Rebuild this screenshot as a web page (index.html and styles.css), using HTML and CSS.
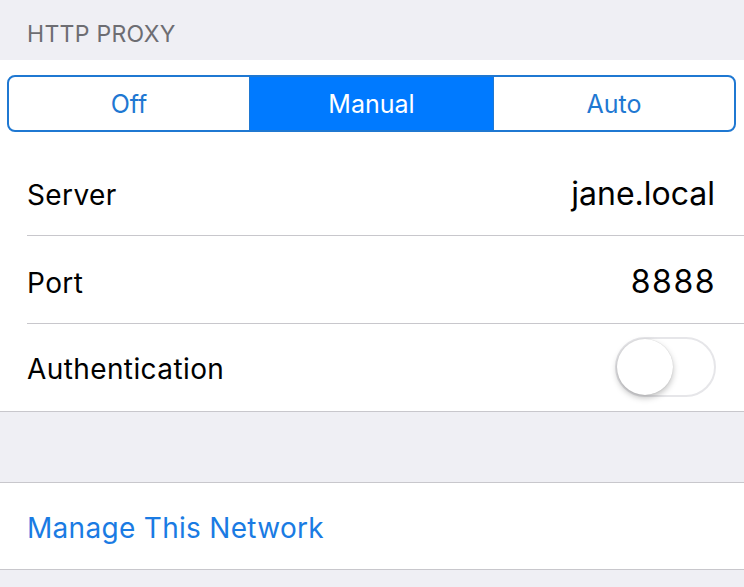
FILE: index.html
```html
<!DOCTYPE html>
<html>
<head>
<meta charset="utf-8">
<link rel="stylesheet" href="styles.css">
</head>
<body>
<div class="page">
  <div class="section-header">HTTP PROXY</div>
  <div class="group">
    <div class="seg-wrap">
      <div class="segmented">
        <div class="seg">Off</div>
        <div class="seg active">Manual</div>
        <div class="seg">Auto</div>
      </div>
    </div>
    <div class="row">
      <span class="label">Server</span>
      <span class="value">jane.local</span>
    </div>
    <div class="row">
      <span class="label">Port</span>
      <span class="value digits">8888</span>
    </div>
    <div class="row last">
      <span class="label toggle-label">Authentication</span>
      <div class="switch"><div class="knob"></div></div>
    </div>
  </div>
  <div class="gap"></div>
  <div class="group">
    <div class="row last">
      <span class="link">Manage This Network</span>
    </div>
  </div>
</div>
</body>
</html>
```

FILE: styles.css
```css
html, body {
  margin: 0;
  padding: 0;
  background: #efeff4;
}
body {
  font-family: Inter, "Noto Sans", sans-serif;
  width: 744px;
  height: 587px;
  overflow: hidden;
}
.page {
  display: flex;
  flex-direction: column;
}
.section-header {
  height: 60px;
  box-sizing: border-box;
  padding: 21px 0 0 27px;
  font-size: 23px;
  color: #6d6d72;
  letter-spacing: 0.3px;
  line-height: 26px;
}
.group {
  background: #fff;
  border-bottom: 1px solid #c8c7cc;
}
.gap + .group {
  border-top: 1px solid #c8c7cc;
}
.gap {
  height: 70px;
}
.seg-wrap {
  padding: 15px 8px 16px 7px;
}
.segmented {
  display: flex;
  height: 57px;
  box-sizing: border-box;
  border: 2px solid #1f78d2;
  border-radius: 8px;
  overflow: hidden;
}
.seg {
  flex: 1;
  display: flex;
  align-items: center;
  justify-content: center;
  font-size: 25px;
  color: #1f78d2;
  padding-top: 1px;
}
.seg.active {
  background: #007aff;
  color: #fff;
  border-left: 1px solid #1f78d2;
  border-right: 1px solid #1f78d2;
  flex: 0 0 243px;
}
.row {
  margin-left: 27px;
  padding-right: 29px;
  height: 87px;
  display: flex;
  align-items: center;
  justify-content: space-between;
  border-bottom: 1px solid #c8c7cc;
  font-size: 28px;
  letter-spacing: 0.4px;
  color: #000;
}
.row.last {
  border-bottom: none;
}
.group:last-child .row {
  height: 86px;
}
.label {
  padding-top: 6px;
}
.label.toggle-label {
  padding-top: 2px;
}
.link {
  padding-top: 3px;
}
.value {
  color: #000;
  font-size: 32px;
  letter-spacing: 0;
  padding-top: 4px;
}
.value.digits {
  letter-spacing: 1.5px;
  margin-right: -1px;
}
.link {
  color: #1a7be3;
  letter-spacing: 0.3px;
}
.switch {
  width: 101px;
  height: 60px;
  box-sizing: border-box;
  border: 2px solid #e6e6e9;
  border-radius: 30px;
  position: relative;
  margin-right: -1px;
  margin-top: -2px;
  background: #fff;
}
.knob {
  position: absolute;
  left: 0;
  top: 0;
  width: 56px;
  height: 56px;
  border-radius: 50%;
  background: #fff;
  box-shadow: 0 3px 6px rgba(0,0,0,0.25), 0 0 1px rgba(0,0,0,0.2);
}
```
